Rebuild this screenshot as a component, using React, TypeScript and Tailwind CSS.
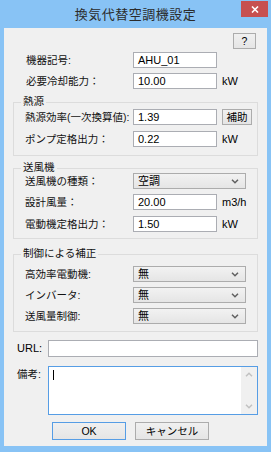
import React from 'react'

const FONT = '[font-family:"Liberation_Sans","Noto_Sans_CJK_JP",sans-serif]'

function Chevron({ up = false, color = '#606060' }: { up?: boolean; color?: string }) {
  return (
    <svg width="8" height="5" viewBox="0 0 8 5" className="block">
      <path
        d={up ? 'M1 4.2 L4 1.2 L7 4.2' : 'M1 0.8 L4 3.8 L7 0.8'}
        fill="none"
        stroke={color}
        strokeWidth="1.5"
      />
    </svg>
  )
}

function TextBox({ value, w = 'w-[84px]' }: { value?: string; w?: string }) {
  return (
    <div className={`${w} h-[16px] bg-white border border-[#abadb3] flex items-center pl-[4px] text-[11px] leading-none text-black`}>
      {value}
    </div>
  )
}

function Combo({ value }: { value: string }) {
  return (
    <div className="w-[113px] h-[16px] border border-[#acacac] bg-gradient-to-b from-[#f2f2f2] to-[#e5e5e5] flex items-center justify-between pl-[4px] pr-[6px] text-[11px] leading-none text-black">
      <span>{value}</span>
      <Chevron />
    </div>
  )
}

function Btn({ children, cls, primary = false }: { children: React.ReactNode; cls: string; primary?: boolean }) {
  return (
    <div
      className={`${cls} border ${primary ? 'border-[#569de5]' : 'border-[#acacac]'} bg-gradient-to-b from-[#f0f0f0] to-[#e5e5e5] flex items-center justify-center text-[10.5px] leading-none text-black`}
    >
      {children}
    </div>
  )
}

function Row({ label, children, labelW = 'w-[108px]', unit }: { label: string; children: React.ReactNode; labelW?: string; unit?: string }) {
  return (
    <div className="h-[16px] flex items-center">
      <span className={`${labelW} shrink-0 text-[10.5px] leading-none text-[#111] whitespace-nowrap`}>{label}</span>
      {children}
      {unit && <span className="ml-[5px] text-[11px] leading-none text-black">{unit}</span>}
    </div>
  )
}

function Group({ title, children, cls }: { title: string; children: React.ReactNode; cls: string }) {
  return (
    <div className={`relative mx-[9px] border border-[#dcdcdc] pl-[11px] flex flex-col ${cls}`}>
      <span className="absolute left-[7px] -top-[9px] px-[2px] bg-[#f0f0f0] text-[10.5px] leading-[14px] text-[#111]">
        {title}
      </span>
      {children}
    </div>
  )
}

export default function App() {
  return (
    <div className={`w-[271px] h-[452px] bg-[#88c3f5] flex flex-col ${FONT}`}>
      {/* Title bar */}
      <div className="relative h-[28px] shrink-0 flex items-center justify-center">
        <span className="text-[13px] leading-none text-[#2b2b2b] tracking-[0.5px]">換気代替空調機設定</span>
        <div className="absolute right-[3px] top-[1px] w-[27px] h-[16px] bg-[#c75050] flex items-center justify-center">
          <svg width="8" height="7" viewBox="0 0 8 7">
            <path d="M1 0.5 L7 6.5 M7 0.5 L1 6.5" stroke="#fff" strokeWidth="1.6" />
          </svg>
        </div>
      </div>

      {/* Client area */}
      <div className="flex-1 mx-[4px] mb-[6px] bg-[#f0f0f0] flex flex-col">
        <div className="mt-[5px] flex justify-end pr-[11px]">
          <Btn cls="w-[23px] h-[16px]">?</Btn>
        </div>

        <div className="mt-[3px] pl-[22px] flex flex-col gap-[5px]">
          <Row label="機器記号:" labelW="w-[107px]">
            <TextBox value="AHU_01" />
          </Row>
          <Row label="必要冷却能力：" labelW="w-[107px]" unit="kW">
            <TextBox value="10.00" />
          </Row>
        </div>

        <Group title="熱源" cls="mt-[13px] pt-[6px] pb-[8px] gap-[6px]">
          <Row label="熱源効率(一次換算値):">
            <TextBox value="1.39" />
            <Btn cls="ml-[5px] w-[30px] h-[16px]">補助</Btn>
          </Row>
          <Row label="ポンプ定格出力：" unit="kW">
            <TextBox value="0.22" />
          </Row>
        </Group>

        <Group title="送風機" cls="mt-[12px] pt-[4px] pb-[6px]">
          <Row label="送風機の種類：">
            <Combo value="空調" />
          </Row>
          <div className="mt-[5px]">
            <Row label="設計風量：" unit="m3/h">
              <TextBox value="20.00" />
            </Row>
          </div>
          <div className="mt-[6px]">
            <Row label="電動機定格出力：" unit="kW">
              <TextBox value="1.50" />
            </Row>
          </div>
        </Group>

        <Group title="制御による補正" cls="mt-[15px] pt-[11px] pb-[7px] gap-[5px]">
          <Row label="高効率電動機:">
            <Combo value="無" />
          </Row>
          <Row label="インバータ:">
            <Combo value="無" />
          </Row>
          <Row label="送風量制御:">
            <Combo value="無" />
          </Row>
        </Group>

        <div className="mt-[8px] pl-[13px] h-[17px] flex items-center">
          <span className="w-[31px] text-[11px] leading-none text-black">URL:</span>
          <div className="w-[210px] h-[17px] bg-white border border-[#abadb3]" />
        </div>

        <div className="mt-[9px] pl-[13px] flex items-start">
          <span className="w-[31px] pt-[3px] text-[10.5px] leading-none text-[#111]">備考:</span>
          <div className="w-[210px] h-[49px] bg-white border border-[#569de5] flex">
            <div className="flex-1 pl-[4px] pt-[3px]">
              <div className="w-px h-[10px] bg-black" />
            </div>
            <div className="w-[16px] bg-[#f0f0f0] flex flex-col items-center justify-between py-[5px]">
              <Chevron up color="#c2c2c2" />
              <Chevron color="#c2c2c2" />
            </div>
          </div>
        </div>

        <div className="mt-[7px] pl-[48px] flex gap-[9px]">
          <Btn cls="w-[74px] h-[18px]" primary>OK</Btn>
          <Btn cls="w-[74px] h-[18px]">キャンセル</Btn>
        </div>
      </div>
    </div>
  )
}
